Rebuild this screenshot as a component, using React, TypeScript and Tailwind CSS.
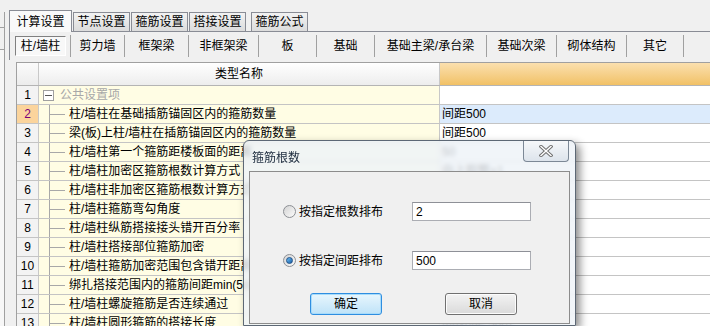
import React from "react";

type Row = {
  n: number;
  name: string;
  value: string;
  group?: boolean;
  selected?: boolean;
};

const ROWS: Row[] = [
  { n: 1, name: "公共设置项", value: "", group: true },
  { n: 2, name: "柱/墙柱在基础插筋锚固区内的箍筋数量", value: "间距500", selected: true },
  { n: 3, name: "梁(板)上柱/墙柱在插筋锚固区内的箍筋数量", value: "间距500" },
  { n: 4, name: "柱/墙柱第一个箍筋距楼板面的距离", value: "50" },
  { n: 5, name: "柱/墙柱加密区箍筋根数计算方式", value: "向上取整+1" },
  { n: 6, name: "柱/墙柱非加密区箍筋根数计算方式", value: "向上取整-1" },
  { n: 7, name: "柱/墙柱箍筋弯勾角度", value: "135°" },
  { n: 8, name: "柱/墙柱纵筋搭接接头错开百分率", value: "50%" },
  { n: 9, name: "柱/墙柱搭接部位箍筋加密", value: "是" },
  { n: 10, name: "柱/墙柱箍筋加密范围包含错开距离", value: "是" },
  { n: 11, name: "绑扎搭接范围内的箍筋间距min(5d,100)", value: "≤100" },
  { n: 12, name: "柱/墙柱螺旋箍筋是否连续通过", value: "是" },
  { n: 13, name: "柱/墙柱圆形箍筋的搭接长度", value: "max(lae,300)" },
];

const TOP_TABS = ["计算设置", "节点设置", "箍筋设置", "搭接设置", "箍筋公式"];

// widths include the right separator line
const SUB_TABS: { label: string; w: string }[] = [
  { label: "剪力墙", w: "w-[54px]" },
  { label: "框架梁", w: "w-[64px]" },
  { label: "非框架梁", w: "w-[70px]" },
  { label: "板", w: "w-[58px]" },
  { label: "基础", w: "w-[58px]" },
  { label: "基础主梁/承台梁", w: "w-[112px]" },
  { label: "基础次梁", w: "w-[70px]" },
  { label: "砌体结构", w: "w-[70px]" },
  { label: "其它", w: "w-[57px]" },
];

function Radio({ checked }: { checked?: boolean }) {
  return (
    <span className="w-[13px] h-[13px] rounded-full border border-[#8c8f94] bg-gradient-to-br from-[#d4d4d4] to-[#fbfbfb] flex items-center justify-center shrink-0">
      {checked && (
        <span className="w-[7px] h-[7px] rounded-full bg-gradient-to-br from-[#6cc0f5] to-[#1a5fa8] border border-[#1f4f86]" />
      )}
    </span>
  );
}

function CloseGlyph() {
  return (
    <svg width="14" height="12" viewBox="0 0 14 12">
      <path d="M2 1.5 L12 10.5 M12 1.5 L2 10.5" stroke="#707070" strokeWidth="3.4" strokeLinecap="square" />
      <path d="M2 1.5 L12 10.5 M12 1.5 L2 10.5" stroke="#ffffff" strokeWidth="1.4" strokeLinecap="square" />
    </svg>
  );
}

function TreeCell({ row }: { row: Row }) {
  if (row.group) {
    return (
      <div className="flex items-center h-full">
        <span className="ml-[4px] w-[11px] h-[11px] border border-[#a0a0a0] bg-white flex items-center justify-center">
          <span className="w-[7px] h-[1px] bg-[#555]" />
        </span>
        <span className="ml-[6px] text-[#a8a8a8]">{row.name}</span>
      </div>
    );
  }
  return (
    <div className="flex items-center h-full">
      <span className="ml-[10px] h-full border-l border-[#a8a8a8] flex items-center">
        <span className="w-[15px] h-[1px] bg-[#a8a8a8]" />
      </span>
      <span className="ml-[4px] whitespace-nowrap">{row.name}</span>
    </div>
  );
}

export default function App() {
  return (
    <div className="relative w-[710px] h-[326px] overflow-hidden bg-[#f0f0f0] text-[12px] text-black font-['Liberation_Sans','Noto_Sans_CJK_SC',sans-serif] leading-none">
      <div className="flex h-full">
        {/* left neighbouring panel edge */}
        <div className="w-[5px] h-full flex flex-col">
          <div className="h-[12px]" />
          <div className="h-[16px] border-r border-b border-[#a0a0a0]" />
          <div className="h-[22px] border-r border-b border-[#a0a0a0]" />
          <div className="flex-1 border-r border-[#a0a0a0] bg-[#f7f7f7]" />
        </div>

        <div className="flex-1 ml-[4px] flex flex-col min-w-0">
          {/* top tabs */}
          <div className="h-[31px] flex items-end shrink-0">
            {TOP_TABS.map((t, i) =>
              i === 0 ? (
                <div
                  key={t}
                  className="relative z-10 -mb-[1px] w-[63px] h-[22px] border border-b-0 border-[#898c95] bg-[#f9f9f9] flex items-center justify-center"
                >
                  {t}
                </div>
              ) : (
                <div
                  key={t}
                  className={`${i === 4 ? "ml-[5px]" : "ml-[1px]"} w-[57px] h-[19px] border border-b-0 border-[#898c95] bg-gradient-to-b from-[#f2f2f2] to-[#dcdcdc] flex items-center justify-center`}
                >
                  {t}
                </div>
              )
            )}
          </div>

          {/* sub tabs */}
          <div className="h-[29px] shrink-0 border-t border-l border-[#898c95] flex items-center">
            <div className="w-[61px] h-[22px] flex items-center border-r border-[#a0a0a0]">
              <div className="ml-[5px] w-[51px] h-[20px] border border-t-[#808080] border-l-[#808080] border-r-white border-b-white bg-[#f8f8f8] flex items-center justify-center">
                柱/墙柱
              </div>
            </div>
            {SUB_TABS.map((s) => (
              <div
                key={s.label}
                className={`${s.w} h-[22px] border-r border-[#a0a0a0] flex items-center justify-center whitespace-nowrap`}
              >
                {s.label}
              </div>
            ))}
          </div>

          {/* grid */}
          <div className="mt-[2px] ml-[7px] flex-1 border-t border-l border-[#a0a0a0] bg-white min-h-0">
            <div className="flex h-[23px] border-b border-[#b4b4b4]">
              <div className="w-[22px] shrink-0 border-r border-[#c8c8c8] bg-gradient-to-b from-[#fbfbfb] to-[#ececec]" />
              <div className="w-[401px] shrink-0 border-r border-[#c8c8c8] bg-gradient-to-b from-[#ffffff] to-[#ededed] flex items-center justify-center">
                类型名称
              </div>
              <div className="flex-1 bg-gradient-to-b from-[#fbe0ae] to-[#f1c165]" />
            </div>
            {ROWS.map((r) => (
              <div key={r.n} className="flex h-[19px] border-b border-[#c4c4c4]">
                <div
                  className={`w-[22px] shrink-0 border-r border-[#c8c8c8] flex items-center justify-center ${
                    r.selected ? "bg-[#fbd49c] text-[#7a007a]" : "bg-[#f3f3f3]"
                  }`}
                >
                  {r.n}
                </div>
                <div className="w-[401px] shrink-0 border-r border-[#c8c8c8] bg-[#fffde4] overflow-hidden">
                  <TreeCell row={r} />
                </div>
                <div
                  className={`flex-1 pl-[2px] flex items-center whitespace-nowrap ${
                    r.selected ? "bg-[#dcebfc]" : "bg-white"
                  }`}
                >
                  {r.value}
                </div>
              </div>
            ))}
          </div>
        </div>
      </div>

      {/* dialog */}
      <div className="absolute left-[243px] top-[140px] w-[333px] h-[186px] rounded-t-[6px] border border-[#5d6875] bg-[#eef3f8]/80 backdrop-blur-[2px] shadow-[4px_4px_8px_rgba(0,0,0,0.45)] flex flex-col">
        <div className="h-[30px] shrink-0 flex items-start">
          <span className="ml-[8px] mt-[11px] text-[#1b2a3c]">箍筋根数</span>
          <div className="ml-auto mr-[6px] w-[46px] h-[21px] border border-t-0 border-[#7c8896] rounded-b-[4px] bg-gradient-to-b from-[#f6f8fa] to-[#dde4ec] flex items-center justify-center">
            <CloseGlyph />
          </div>
        </div>
        <div className="mx-[5px] h-[153px] border border-[#8c8c8c] bg-[#f0f0f0] flex flex-col">
          <div className="mt-[30px] ml-[33px] flex items-center h-[19px]">
            <div className="w-[129px] flex items-center gap-[3px]">
              <Radio />
              <span>按指定根数排布</span>
            </div>
            <div className="w-[119px] h-[19px] border border-[#abadb3] border-t-[#8e9097] bg-white flex items-center pl-[3px]">
              2
            </div>
          </div>
          <div className="mt-[30px] ml-[33px] flex items-center h-[19px]">
            <div className="w-[129px] flex items-center gap-[3px]">
              <Radio checked />
              <span>按指定间距排布</span>
            </div>
            <div className="w-[119px] h-[19px] border border-[#abadb3] border-t-[#8e9097] bg-white flex items-center pl-[3px]">
              500
            </div>
          </div>
          <div className="mt-[23px] ml-[60px] flex gap-[63px]">
            <div className="w-[72px] h-[22px] rounded-[3px] border border-[#2f8ee0] bg-gradient-to-b from-[#e8f6fd] to-[#bfe3f8] shadow-[inset_0_0_0_1px_#a8dcfb] flex items-center justify-center">
              确定
            </div>
            <div className="w-[72px] h-[22px] rounded-[3px] border border-[#707070] bg-gradient-to-b from-[#f3f3f3] to-[#dadada] shadow-[inset_0_0_0_1px_#fcfcfc] flex items-center justify-center">
              取消
            </div>
          </div>
        </div>
      </div>
    </div>
  );
}
